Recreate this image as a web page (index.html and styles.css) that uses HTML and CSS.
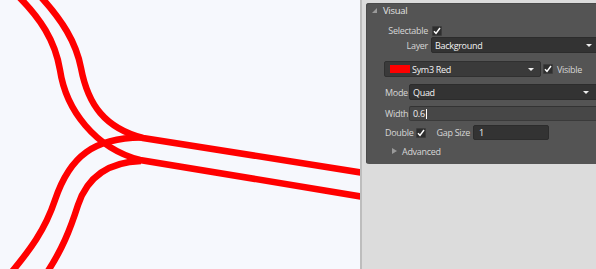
FILE: index.html
```html
<!DOCTYPE html>
<html lang="en">

<head>
    <meta charset="UTF-8">
    <title>Track Properties</title>
    <link rel="stylesheet" href="styles.css">
</head>

<body>
    <div class="app">
        <div class="canvas">
            <svg class="track" width="360" height="269" viewBox="0 0 360 269">
                <g fill="none" stroke="#ff0000" stroke-width="6.5">
                    <path d="M 18,-4 C 40,18 55,40 60,70 C 66,110 95,148 140,160 L 364,197" />
                    <path d="M 40,-4 C 62,20 76,42 81,68 C 88,105 105,128 143,138 L 364,173" />
                    <path d="M 10,274 C 30,250 45,230 55,200 C 70,155 95,138 141,137.5" />
                    <path d="M 46,274 C 62,250 70,230 78,205 C 88,175 110,162 141,161" />
                </g>
            </svg>
        </div>
        <div class="splitter"></div>
        <div class="side">
            <section class="panel">
                <div class="panel-head"><span class="tri-open"></span>Visual</div>

                <div class="row row-selectable">
                    <span class="lbl lbl-wide">Selectable</span>
                    <span class="check"><svg width="8" height="8" viewBox="0 0 8 8"><path d="M1 4.2 L3 6.4 L7 1" /></svg></span>
                </div>

                <div class="row row-layer">
                    <span class="lbl lbl-wide">Layer</span>
                    <div class="select select-layer">Background<span class="arrow"></span></div>
                </div>

                <div class="row row-color">
                    <div class="select select-color"><span class="swatch"></span>Sym3 Red<span class="arrow"></span></div>
                    <span class="check"><svg width="8" height="8" viewBox="0 0 8 8"><path d="M1 4.2 L3 6.4 L7 1" /></svg></span>
                    <span class="lbl">Visible</span>
                </div>

                <div class="row row-mode">
                    <span class="lbl lbl-short">Mode</span>
                    <div class="select select-mode">Quad<span class="arrow"></span></div>
                </div>

                <div class="row row-width">
                    <span class="lbl lbl-short">Width</span>
                    <div class="input input-wide">0.6<span class="caret"></span></div>
                </div>

                <div class="row row-double">
                    <span class="lbl">Double</span>
                    <span class="check"><svg width="8" height="8" viewBox="0 0 8 8"><path d="M1 4.2 L3 6.4 L7 1" /></svg></span>
                    <span class="lbl lbl-gap">Gap Size</span>
                    <div class="input input-gap">1</div>
                </div>

                <div class="row row-advanced">
                    <span class="tri-closed"></span>
                    <span class="lbl">Advanced</span>
                </div>
            </section>
        </div>
    </div>
</body>

</html>
```

FILE: styles.css
```css
/* Property panel beside the track canvas */
body {
    margin: 0;
    padding: 0;
    overflow: hidden;
    font-family: "Open Sans", "Noto Sans", sans-serif;
    font-size: 9px;
    letter-spacing: -0.3px;
}

.app {
    display: flex;
    height: 269px;
    width: 596px;
    overflow: hidden;
}

.canvas {
    width: 360px;
    flex: none;
    background-color: #f6f8fd;
    overflow: hidden;
}

.track {
    display: block;
}

.splitter {
    width: 2px;
    flex: none;
    background-color: #bdbdbd;
}

.side {
    flex: 1;
    background-color: #dcdcdc;
    padding: 3px 0 0 4px;
    overflow: hidden;
}

.panel {
    width: 250px;
    height: 161px;
    background-color: #545454;
    border-top-left-radius: 3px;
    border-bottom-left-radius: 3px;
    box-shadow: inset 1px 1px 0 #4a4a4a;
    color: #d6d6d6;
}

.panel-head {
    display: flex;
    align-items: center;
    height: 14px;
    padding-left: 6px;
    font-size: 9.5px;
    color: #e2e2e2;
}

.tri-open {
    width: 0;
    height: 0;
    border-left: 5px solid transparent;
    border-bottom: 5px solid #9a9a9a;
    margin-right: 6px;
}

.row {
    display: flex;
    align-items: center;
}

.lbl {
    white-space: nowrap;
}

.lbl-wide {
    width: 62px;
    text-align: right;
}

.lbl-short {
    width: 24px;
}

.row-selectable {
    height: 13px;
    margin-top: 7px;
}

.row-selectable .check {
    margin-left: 4px;
}

.row-layer {
    height: 16px;
}

.row-layer .select {
    margin-left: 3px;
}

.row-color {
    height: 16px;
    margin-top: 8px;
    padding-left: 18px;
}

.row-color .check {
    margin-left: 2px;
    margin-right: 4px;
}

.row-mode {
    height: 16px;
    margin-top: 7px;
    padding-left: 19px;
}

.row-width {
    height: 15px;
    margin-top: 6px;
    padding-left: 19px;
}

.row-double {
    height: 15px;
    margin-top: 4px;
    padding-left: 19px;
}

.row-double .check {
    margin-left: 2px;
}

.lbl-gap {
    margin-left: 11px;
    margin-right: 3px;
}

.row-advanced {
    height: 14px;
    margin-top: 4px;
    padding-left: 26px;
}

.tri-closed {
    width: 0;
    height: 0;
    border-top: 3px solid transparent;
    border-bottom: 3px solid transparent;
    border-left: 5px solid #9a9a9a;
    margin-right: 5px;
}

.check {
    display: flex;
    align-items: center;
    justify-content: center;
    width: 10px;
    height: 10px;
    box-sizing: border-box;
    background-color: #2e2e2e;
    border: 1px solid #3c3c3c;
    border-radius: 1px;
}

.check svg path {
    fill: none;
    stroke: #ffffff;
    stroke-width: 1.5;
}

.select,
.input {
    position: relative;
    display: flex;
    align-items: center;
    height: 100%;
    box-sizing: border-box;
    padding-left: 3px;
    background-color: #333333;
    border: 1px solid #2c2c2c;
    border-radius: 2px;
    color: #f2f2f2;
}

.select-layer {
    flex: none;
    width: 168px;
}

.select-mode {
    flex: none;
    width: 190px;
}

.select-color {
    width: 157px;
    padding-left: 5px;
    background-color: #3a3a3a;
    border-color: #303030;
}

.swatch {
    width: 20px;
    height: 8px;
    background-color: #ff0000;
    margin-right: 2px;
}

.arrow {
    position: absolute;
    right: 6px;
    top: 6px;
    width: 0;
    height: 0;
    border-left: 3px solid transparent;
    border-right: 3px solid transparent;
    border-top: 3px solid #eeeeee;
}

.select-mode .arrow {
    right: 9px;
}

.input-wide {
    flex: none;
    width: 190px;
    background-color: #474747;
    border-color: #3a3a3a;
    border-top-color: #333333;
}

.caret {
    width: 1px;
    height: 10px;
    margin-left: 1px;
    background-color: #ffffff;
}

.input-gap {
    width: 76px;
    padding-left: 5px;
}
```
